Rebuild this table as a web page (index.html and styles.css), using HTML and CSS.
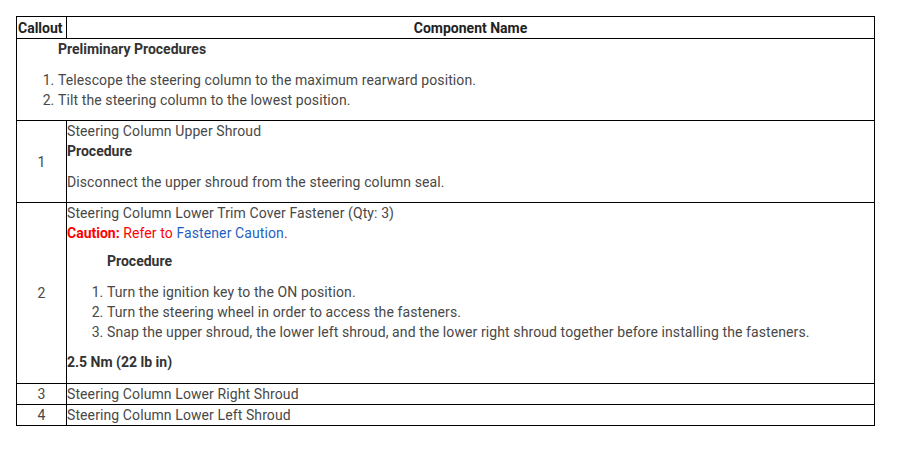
FILE: index.html
```html
<!DOCTYPE html>
<html>
<head>
<meta charset="utf-8">
<link rel="stylesheet" href="styles.css">
</head>
<body>
<table class="parts">
  <thead>
    <tr>
      <th class="col-callout">Callout</th>
      <th class="col-name">Component Name</th>
    </tr>
  </thead>
  <tbody>
    <tr>
      <td colspan="2" class="prelim">
        <div class="head indent">Preliminary Procedures</div>
        <ol class="steps prelim-steps">
          <li>Telescope the steering column to the maximum rearward position.</li>
          <li>Tilt the steering column to the lowest position.</li>
        </ol>
      </td>
    </tr>
    <tr>
      <td class="num">1</td>
      <td class="name">
        <div>Steering Column Upper Shroud</div>
        <div class="head">Procedure</div>
        <p class="para">Disconnect the upper shroud from the steering column seal.</p>
      </td>
    </tr>
    <tr>
      <td class="num">2</td>
      <td class="name">
        <div>Steering Column Lower Trim Cover Fastener (Qty: 3)</div>
        <div class="caution"><b>Caution:</b> Refer to <a class="link">Fastener Caution</a>.</div>
        <div class="head indent proc2">Procedure</div>
        <ol class="steps">
          <li>Turn the ignition key to the ON position.</li>
          <li>Turn the steering wheel in order to access the fasteners.</li>
          <li>Snap the upper shroud, the lower left shroud, and the lower right shroud together before installing the fasteners.</li>
        </ol>
        <div class="head torque">2.5 Nm (22 lb in)</div>
      </td>
    </tr>
    <tr>
      <td class="num">3</td>
      <td class="name">Steering Column Lower Right Shroud</td>
    </tr>
    <tr>
      <td class="num">4</td>
      <td class="name">Steering Column Lower Left Shroud</td>
    </tr>
  </tbody>
</table>
</body>
</html>
```
FILE: styles.css
```css
html, body {
  margin: 0;
  background: #fff;
}
body {
  padding: 16px;
  font-family: Roboto, "Liberation Sans", sans-serif;
  font-size: 14px;
  line-height: 20px;
  color: #484848;
  letter-spacing: 0.1px;
}
.parts {
  border-collapse: collapse;
  width: 859px;
}
.parts th,
.parts td {
  border: 1px solid #000;
  padding: 0 1px;
  vertical-align: middle;
}
.parts td.name {
  padding-left: 0;
}
.parts th {
  font-weight: bold;
  color: #222;
  height: 21px;
  padding: 0 1px;
  letter-spacing: 0;
}
.col-callout {
  width: 47px;
  text-align: left;
}
.col-name {
  text-align: center;
}
.num {
  text-align: center;
}
.name {
  text-align: left;
}
.head {
  font-weight: bold;
  color: #333;
  letter-spacing: 0;
}
.caution b {
  letter-spacing: 0;
}
.indent {
  padding-left: 40px;
}
.steps {
  margin: 11px 0 10px 0;
  padding-left: 40px;
}
.para {
  margin: 11px 0 10px 0;
}
.caution {
  color: #f00;
}
.link {
  color: #1f62c3;
  text-decoration: none;
}
.proc2 {
  margin-top: 8px;
}
.torque {
  margin-top: 9px;
  margin-bottom: 11px;
}
```
